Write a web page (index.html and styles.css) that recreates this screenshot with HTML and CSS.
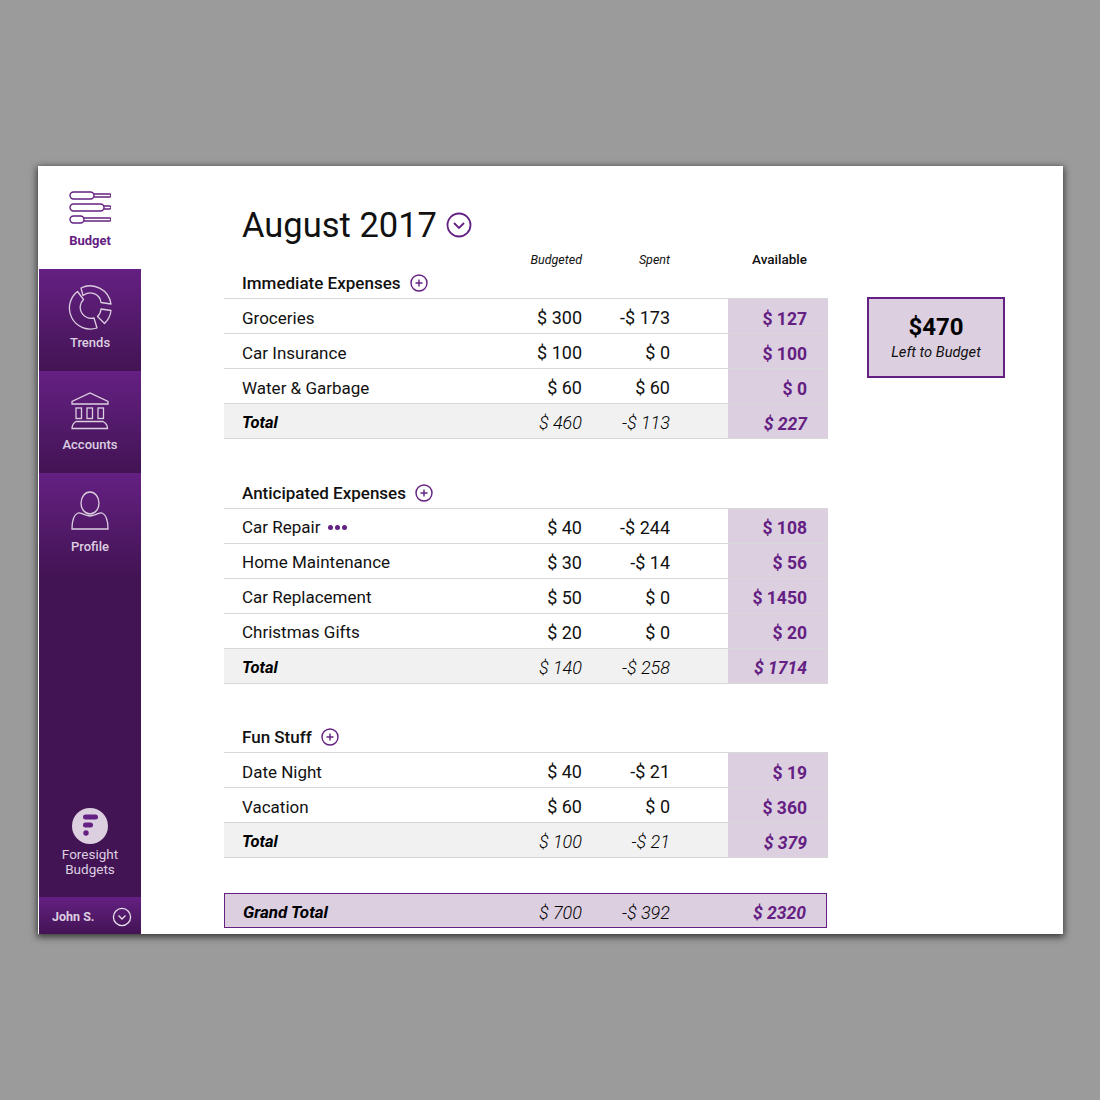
FILE: index.html
```html
<!DOCTYPE html>
<html lang="en">
<head>
<meta charset="utf-8">
<title>August 2017 Budget</title>
<link rel="stylesheet" href="styles.css">
</head>
<body>
<div class="app">
  <nav class="sidebar">
    <a class="nav-item active">
      <svg class="nav-icon" viewBox="0 0 42 34" width="42" height="34" fill="none" stroke="#642082" stroke-width="1.4">
        <rect x="1" y="1" width="24" height="7" rx="3.5"/><path d="M25 3h15.5a1.4 1.4 0 0 1 0 3H25"/>
        <rect x="1" y="13" width="34" height="7" rx="3.5"/><path d="M35 15h5.500a1.400 1.400 0 0 1 0 3H35"/>
        <rect x="1" y="25" width="14" height="7" rx="3.500"/><path d="M15 27h25.500a1.400 1.400 0 0 1 0 3H15"/>
      </svg>
      <span>Budget</span>
    </a>
    <a class="nav-item">
      <svg class="nav-icon" viewBox="0 0 44 44" width="44" height="44" fill="none" stroke="#dccfe0" stroke-width="1.300" stroke-linejoin="round">
        <path d="M13 2.500A21 21 0 0 1 43 18.500L33 17A11 11 0 0 0 15 10Z"/>
        <path d="M9.500 6A21 21 0 0 0 29 42.500L26 32.500A11 11 0 0 1 15.500 14Z"/>
        <path d="M33 23.500L43 25A21 21 0 0 1 36.500 38L29.500 31A11 11 0 0 0 33 23.500Z"/>
      </svg>
      <span>Trends</span>
    </a>
    <a class="nav-item">
      <svg class="nav-icon" viewBox="0 -2.500 38 41" width="38" height="41" fill="none" stroke="#dccfe0" stroke-width="1.300">
        <path d="M1 12.500V10L19 1.500L37 10V12.500Z"/>
        <rect x="5" y="16.500" width="5.500" height="10.500"/><rect x="16" y="16.500" width="5.500" height="10.500"/><rect x="27" y="16.500" width="5.500" height="10.500"/>
        <path d="M5 30H32C35 31.500 36.500 33.500 36.500 37H1C1 33.500 2.500 31.500 5 30Z"/>
      </svg>
      <span>Accounts</span>
    </a>
    <a class="nav-item">
      <svg class="nav-icon" viewBox="0 1 38 39" width="38" height="39" fill="none" stroke="#dccfe0" stroke-width="1.300">
        <ellipse cx="19" cy="12" rx="9" ry="11"/>
        <path d="M1 38C1 30 2 24 7 22C10 21 11 24 19 25C27 24 28 21 31 22C36 24 37 30 37 38Z"/>
      </svg>
      <span>Profile</span>
    </a>
    <div class="sidebar-fill"></div>
    <div class="brand">
      <svg viewBox="0 0 36 36" width="36" height="36">
        <circle cx="18" cy="18" r="18" fill="#dccfe0"/>
        <rect x="11" y="6.500" width="15" height="5" rx="2.500" fill="#642082"/>
        <rect x="11" y="14.500" width="10" height="5" rx="2.500" fill="#642082"/>
        <circle cx="14" cy="25" r="2.700" fill="#642082"/>
      </svg>
      <span>Foresight<br>Budgets</span>
    </div>
    <div class="user">
      <span>John S.</span>
      <svg viewBox="0 0 20 20" width="20" height="20" fill="none" stroke="#e8dfea" stroke-width="1.300">
        <circle cx="10" cy="10" r="8.600"/><path d="M6.500 8.500L10 12L13.500 8.500"/>
      </svg>
    </div>
  </nav>

  <main class="main">
    <div class="budget">
      <h1 class="title">August 2017
        <svg class="title-icon" viewBox="0 0 26 26" width="26" height="26" fill="none" stroke="#642082" stroke-width="1.800">
          <circle cx="13" cy="13" r="11.500"/><path d="M8 11L13 16L18 11"/>
        </svg>
      </h1>
      <div class="columns">
        <span class="col-name"></span>
        <span class="col-num">Budgeted</span>
        <span class="col-num wide">Spent</span>
        <span class="col-avail">Available</span>
      </div>

      <section class="group">
        <h2 class="group-title first">Immediate Expenses <svg class="plus" viewBox="0 0 18 18" width="18" height="18" fill="none" stroke="#642082" stroke-width="1.400"><circle cx="9" cy="9" r="8"/><path d="M9 5.500v7M5.500 9h7"/></svg></h2>
        <div class="row"><span class="col-name">Groceries</span><span class="col-num">$ 300</span><span class="col-num wide">-$ 173</span><span class="col-avail">$ 127</span></div>
        <div class="row"><span class="col-name">Car Insurance</span><span class="col-num">$ 100</span><span class="col-num wide">$ 0</span><span class="col-avail">$ 100</span></div>
        <div class="row"><span class="col-name">Water &amp; Garbage</span><span class="col-num">$ 60</span><span class="col-num wide">$ 60</span><span class="col-avail">$ 0</span></div>
        <div class="row total"><span class="col-name">Total</span><span class="col-num">$ 460</span><span class="col-num wide">-$ 113</span><span class="col-avail">$ 227</span></div>
      </section>

      <section class="group">
        <h2 class="group-title">Anticipated Expenses <svg class="plus" viewBox="0 0 18 18" width="18" height="18" fill="none" stroke="#642082" stroke-width="1.400"><circle cx="9" cy="9" r="8"/><path d="M9 5.500v7M5.500 9h7"/></svg></h2>
        <div class="row"><span class="col-name">Car Repair <span class="dots"><i></i><i></i><i></i></span></span><span class="col-num">$ 40</span><span class="col-num wide">-$ 244</span><span class="col-avail">$ 108</span></div>
        <div class="row"><span class="col-name">Home Maintenance</span><span class="col-num">$ 30</span><span class="col-num wide">-$ 14</span><span class="col-avail">$ 56</span></div>
        <div class="row"><span class="col-name">Car Replacement</span><span class="col-num">$ 50</span><span class="col-num wide">$ 0</span><span class="col-avail">$ 1450</span></div>
        <div class="row"><span class="col-name">Christmas Gifts</span><span class="col-num">$ 20</span><span class="col-num wide">$ 0</span><span class="col-avail">$ 20</span></div>
        <div class="row total"><span class="col-name">Total</span><span class="col-num">$ 140</span><span class="col-num wide">-$ 258</span><span class="col-avail">$ 1714</span></div>
      </section>

      <section class="group">
        <h2 class="group-title">Fun Stuff <svg class="plus" viewBox="0 0 18 18" width="18" height="18" fill="none" stroke="#642082" stroke-width="1.400"><circle cx="9" cy="9" r="8"/><path d="M9 5.500v7M5.500 9h7"/></svg></h2>
        <div class="row"><span class="col-name">Date Night</span><span class="col-num">$ 40</span><span class="col-num wide">-$ 21</span><span class="col-avail">$ 19</span></div>
        <div class="row"><span class="col-name">Vacation</span><span class="col-num">$ 60</span><span class="col-num wide">$ 0</span><span class="col-avail">$ 360</span></div>
        <div class="row total"><span class="col-name">Total</span><span class="col-num">$ 100</span><span class="col-num wide">-$ 21</span><span class="col-avail">$ 379</span></div>
      </section>

      <div class="row grand"><span class="col-name">Grand Total</span><span class="col-num">$ 700</span><span class="col-num wide">-$ 392</span><span class="col-avail">$ 2320</span></div>
    </div>

    <aside class="left-box">
      <strong>$470</strong>
      <em>Left to Budget</em>
    </aside>
  </main>
</div>
</body>
</html>
```

FILE: styles.css
```css
* { box-sizing: border-box; }
html, body { margin: 0; height: 100%; }
body {
  background: #9b9b9b;
  font-family: Roboto, "Noto Sans", sans-serif;
  color: #111;
  padding: 166px 37px 166px 38px;
}
.app {
  display: flex;
  width: 1025px;
  height: 768px;
  background: #fff;
  box-shadow: 0 2px 7px 1px rgba(0, 0, 0, .65);
  overflow: hidden;
}
.sidebar {
  width: 103px;
  flex: none;
  display: flex;
  flex-direction: column;
  background: #431454;
  border-left: 1px solid #fff;
}
.nav-item {
  height: 102px;
  display: flex;
  flex-direction: column;
  align-items: center;
  padding-top: 13px;
  background: linear-gradient(#642082, #431454);
  color: #dccfe0;
  font-size: 13px;
  font-weight: 500;
  line-height: 20px;
}
.nav-icon { display: block; height: 51px; }
.nav-item.active {
  height: 103px;
  padding-top: 25px;
  background: #fff;
  color: #642082;
  font-weight: 700;
}
.nav-item.active .nav-icon { height: 34px; margin-bottom: 6px; }
.sidebar-fill { flex: 1; }
.brand {
  height: 89px;
  display: flex;
  flex-direction: column;
  align-items: center;
  color: #dccfe0;
  font-size: 13.500px;
  line-height: 15px;
  text-align: center;
}
.brand svg { margin-bottom: 3px; }
.user {
  height: 37px;
  flex: none;
  display: flex;
  align-items: center;
  justify-content: space-between;
  padding: 2px 9px 0 13px;
  background: linear-gradient(#642082, #431454);
  color: #dccfe0;
  font-size: 12.500px;
  font-weight: 700;
}
.main {
  flex: 1;
  display: flex;
  align-items: flex-start;
  padding: 36px 0 0 83px;
}
.budget { width: 604px; flex: none; }
.title {
  display: flex;
  align-items: center;
  gap: 9px;
  height: 46px;
  margin: 0;
  padding-left: 18px;
  font-size: 34.500px;
  font-weight: 400;
}
.columns {
  display: flex;
  height: 22px;
  align-items: center;
  font-size: 12.500px;
  font-style: italic;
}
.columns .col-avail { background: none; font-style: normal; color: #111; font-weight: 500; font-size: 13.500px; padding-top: 0; }
.group-title {
  display: flex;
  align-items: center;
  gap: 9px;
  height: 28px;
  margin: 40.500px 0 0;
  padding: 0 0 2px 18px;
  font-size: 17px;
  font-weight: 500;
}
.group-title.first { margin-top: 0; }
.row {
  display: flex;
  align-items: stretch;
  height: 35px;
  border-top: 1px solid #d8d8d8;
  font-size: 18px;
}
.row > span { display: flex; align-items: center; padding-top: 3px; }
.row .col-name { padding-left: 18px; font-size: 17px; }
.col-name { width: 278px; flex: none; }
.col-num { width: 80px; flex: none; justify-content: flex-end; text-align: right; }
.col-num.wide { width: 88px; margin-right: 58px; }
.col-avail {
  width: 100px;
  flex: none;
  justify-content: flex-end;
  text-align: right;
  padding-right: 21px;
  background: #dccfe0;
  color: #642082;
  font-weight: 700;
  font-size: 17.500px;
}
.row > .col-avail { padding-top: 5px; }
.row.total {
  background: #f1f1f1;
  border-bottom: 1px solid #d8d8d8;
  height: 36px;
  font-style: italic;
  font-weight: 300;
  color: #000;
}
.row.total .col-name { font-weight: 700; font-size: 16.500px; }
.row.total .col-avail { color: #642082; }
.dots { display: inline-flex; gap: 2px; margin-left: 8px; }
.dots i { width: 5px; height: 5px; border-radius: 50%; background: #642082; }
.row.grand {
  height: 35px;
  margin: 35px 1px 0 0;
  border: 1px solid #642082;
  background: #dccfe0;
  font-style: italic;
  font-weight: 300;
  color: #000;
}
.row.grand .col-name { font-weight: 700; width: 277px; }
.row.grand .col-avail { width: 98px; background: none; padding-right: 20px; color: #642082; }
.left-box {
  width: 138px;
  height: 81px;
  flex: none;
  margin: 95px 0 0 39px;
  display: flex;
  flex-direction: column;
  align-items: center;
  justify-content: center;
  border: 2px solid #642082;
  background: #dccfe0;
}
.left-box strong { font-size: 24px; line-height: 28px; color: #000; font-weight: 700; }
.left-box em { font-size: 14.700px; line-height: 20px; padding-top: 1px; }
```
